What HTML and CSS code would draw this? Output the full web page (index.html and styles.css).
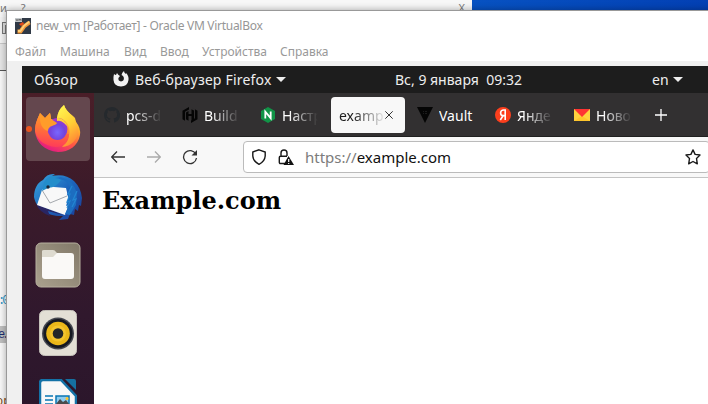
FILE: index.html
```html
<!DOCTYPE html>
<html lang="ru">
<head>
<meta charset="utf-8">
<title>new_vm [Работает] - Oracle VM VirtualBox</title>
<link rel="stylesheet" href="styles.css">
</head>
<body>
<div class="desktop">
  <div class="back-window">
    <div class="back-menu"><span>и</span><span class="help">?</span><span class="close">X</span></div>
    <div class="back-tool"><span class="tool-box"></span></div>
    <div class="back-tabs"></div>
    <div class="back-code">
      <span class="code-a">:0</span>
      <span class="code-b">e.</span>
      <span class="code-c">ор</span>
    </div>
  </div>

  <main class="vm-window">
    <header class="titlebar">
      <svg class="vm-icon" viewBox="0 0 16 16"><rect width="16" height="16" fill="#303946"/><path d="M2.500 13.500H5.500L9 8.500 14.500 4.500" fill="none" stroke="#f49a3c" stroke-width="4"/><path d="M3 13H5.500L9 7.800 14.500 3.500" fill="none" stroke="#ffd27a" stroke-width="1.800"/><path d="M4 6 8 4 9 6 6 8Z" fill="#e34b18"/><path d="M0 0H7V4H0Z" fill="#c3c7ca"/><path d="M1 1 2 3 3 1M4 3V1L5 2 6 1V3" fill="none" stroke="#555" stroke-width=".7"/></svg>
      <span class="title-text">new_vm [Работает] - Oracle VM VirtualBox</span>
    </header>
    <nav class="menubar">
      <span class="m1">Файл</span><span class="m2">Машина</span><span class="m3">Вид</span><span class="m4">Ввод</span><span class="m5">Устройства</span><span class="m6">Справка</span>
    </nav>

    <section class="guest">
      <div class="topbar">
        <span class="overview">Обзор</span>
        <svg class="app-mark" viewBox="0 0 16 16"><path d="M1 3Q2 4 3 4L4 2Q5 4 7 5L5.400 7Q5 10 8 10.500 11.500 10 10.800 6.500 10.400 4.500 8.500 4 9 1.500 11 0 11 2 13 3L13 2Q16 5 15.500 9 14.500 15.500 8 15.500 1 15 .5 9 .3 5.500 1 3Z" fill="#f2f2f2"/></svg>
        <span class="app-name">Веб-браузер Firefox</span>
        <i class="caret"></i>
        <span class="clock">Вс, 9 января&nbsp; 09:32</span>
        <span class="lang">en</span>
        <i class="caret"></i>
      </div>
      <div class="session">
        <aside class="dock">
          <div class="dock-item active">
            <i class="dot"></i>
            <svg class="ic-firefox" viewBox="0 0 46 48">
              <defs>
                <linearGradient id="ff" x1=".8" y1="0" x2=".3" y2="1"><stop offset="0" stop-color="#fff044"/><stop offset=".35" stop-color="#ffb52b"/><stop offset=".65" stop-color="#ff5943"/><stop offset="1" stop-color="#e31587"/></linearGradient>
                <linearGradient id="fy" x1=".3" y1="0" x2=".7" y2="1"><stop offset="0" stop-color="#fff44f"/><stop offset=".5" stop-color="#ffcf35"/><stop offset="1" stop-color="#ff8035"/></linearGradient>
                <linearGradient id="fo" x1=".5" y1="0" x2=".4" y2="1"><stop offset="0" stop-color="#ffa02c"/><stop offset=".4" stop-color="#ff7a33"/><stop offset="1" stop-color="#ff3a5a"/></linearGradient>
                <radialGradient id="fp" cx=".5" cy=".65" r=".6"><stop offset="0" stop-color="#7867ff"/><stop offset=".6" stop-color="#7444dc"/><stop offset="1" stop-color="#a234cb"/></radialGradient>
              </defs>
              <path d="M5 9 10 14 15 9 16 15Q20 16 23 19L22 14Q23 6 29 1 31 7 38 12L40 14 41 18Q46 24 45 31C43 42 34 48 23 48 9 47 1 38 0 27 0 19 3 14 5 9Z" fill="url(#ff)"/>
              <path d="M22 14Q23 6 29 1C31 8 38 11 41 18 47 31 39 42 27 43 37 34 36 22 30 17Q26 13 22 14Z" fill="url(#fy)"/>
              <path d="M5 9 10 14 15 9 16 15Q20 16 22 18V30L34 30C34 38 29 43 21 43 9 42 2 36 0 27 0 19 3 14 5 9Z" fill="url(#fo)"/>
              <ellipse cx="22.500" cy="25" rx="10" ry="11" fill="url(#fp)"/>
              <path d="M5 10 10 14.500 15 9 16 15 22 19C21 22 13 21 13 27 7 26 4 18 5 10Z" fill="#ff9c2a"/>
              <path d="M22 14Q29 13 33 23L29 19Q25 16 22 17Z" fill="#ffd23b"/>
            </svg>
          </div>
          <div class="dock-item">
            <svg class="ic-bird" viewBox="0 0 48 48">
              <defs><linearGradient id="tb" x1="0" y1="0" x2="1" y2="1"><stop stop-color="#38a8df"/><stop offset=".5" stop-color="#1d64bc"/><stop offset="1" stop-color="#1a3891"/></linearGradient></defs>
              <path d="M9 7Q13 0 21 1L18 3Q31 0 40 8 47 15 48 25L47 33 45 32 44 38 41 36 40 42 36 41 34 46 25 47 29 43C15 44 2 36 0 24 0 16 3 10 9 7Z" fill="url(#tb)"/>
              <path d="M2 31Q5 39 16 43L14 38 29 42" fill="#292563"/>
              <path d="M8 17Q12 11 20 14L32 15Q37 31 31 42L3 32Z" fill="#f8f8f8"/>
              <path d="M8 17 16 30 33 23" fill="none" stroke="#a4a8ad"/>
              <path d="M9 14Q10 5 18 3 24 2 27 7 23 14 14 15L8 18Z" fill="#238dcb"/>
              <path d="M21 5Q35 7 36 15L33 22 35 23 32 33 35 32 31 41 36 42 42 32 43 20Q39 7 27 4Z" fill="#1c6dc0"/>
              <path d="M38 13 34 21 36 21 33 29 36 28 33 35M43 18 39 27 42 26 38 34" fill="none" stroke="#2386d2" stroke-width="1.200"/>
              <circle cx="14" cy="14" r="1.700" fill="#17263a"/>
            </svg>
          </div>
          <div class="dock-item">
            <svg class="ic-files" viewBox="0 0 46 46"><defs><linearGradient id="fb" x1="1" x2="0" y1="0" y2="1"><stop stop-color="#827969"/><stop offset="1" stop-color="#aaa18e"/></linearGradient></defs><rect x="1" y="1" width="44" height="44" rx="5" fill="url(#fb)" stroke="#b6af9e"/><path d="M7 9Q7 8 9 8H18Q20 8 21 10L23 12H36V20H7Z" fill="#dedbd0"/><path d="M7 15H18L22 11H36Q39 11 39 14V34Q39 37 36 37H10Q7 37 7 34Z" fill="#faf9f7"/></svg>
          </div>
          <div class="dock-item">
            <svg class="ic-music" viewBox="0 0 38 46"><rect x=".5" y=".5" width="37" height="45" rx="5" fill="#e3dfd5" stroke="#c5c1ba"/><circle cx="19" cy="23.500" r="16" fill="#44464e"/><circle cx="19" cy="23.500" r="14.500" fill="#151821"/><circle cx="19" cy="23.500" r="11.800" fill="#eab719"/><circle cx="19" cy="23.500" r="8" fill="#f3c42d"/><circle cx="19" cy="23.500" r="5.300" fill="#242728"/></svg>
          </div>
          <div class="dock-item last">
            <svg class="ic-writer" viewBox="0 0 38 46"><path d="M4 1H22L37 17V46H1V4Q1 1 4 1Z" fill="#f8f8f8" stroke="#1472a7" stroke-width="2.500"/><path d="M26 0H35Q37 0 37 2V11Z" fill="#1570a1"/><path d="M6 17H14M6 21H14M6 25H14" stroke="#0875b3" stroke-width="1.600"/><rect x="17" y="17" width="13" height="11" fill="#8dccf0" stroke="#0875b3" stroke-width="1.500"/><path d="M17 28V25L21 20 24 23 27 21 30 25V28Z" fill="#4a4b4d"/><circle cx="28" cy="19.500" r="1.500" fill="#ffc327"/></svg>
          </div>
        </aside>

        <div class="browser">
          <div class="tabs">
            <div class="tab"><svg viewBox="0 0 16 16"><path fill="#25292d" d="M8 0C3.580 0 0 3.580 0 8c0 3.540 2.290 6.530 5.470 7.590.4.070.55-.17.55-.38v-1.490c-2.010.37-2.530-.49-2.690-.94-.09-.23-.48-.94-.82-1.130-.28-.15-.68-.52-.01-.53.63-.01 1.080.58 1.230.82.72 1.210 1.870.87 2.330.66.07-.52.28-.87.51-1.070-1.780-.2-3.640-.89-3.640-3.950 0-.87.31-1.590.82-2.150-.08-.2-.36-1.020.08-2.120 0 0 .67-.21 2.200.82a7.500 7.500 0 0 1 4 0c1.530-1.040 2.200-.82 2.200-.82.44 1.100.16 1.920.08 2.120.51.56.82 1.270.82 2.150 0 3.070-1.870 3.750-3.650 3.950.29.25.54.73.54 1.480v2.200c0 .21.15.46.55.38A8 8 0 0 0 8 0Z"/></svg><span class="label">pcs-d</span></div>
            <div class="tab"><svg viewBox="0 0 16 16"><path d="M7 0V2.500L3 4.800V13.700L.5 12.300V3.700ZM4 5.500 6.500 4V7H9.500V2.200L12 3.600V12.300L9.500 13.800V9H6.500V13.700L4 12.300ZM9 0 15.500 3.700V12.300L9 16V13.500L13 11.200V2.300Z" fill="#050505"/></svg><span class="label">Build</span></div>
            <div class="tab"><svg viewBox="0 0 16 16"><path d="M8 0 15 4V12L8 16 1 12V4Z" fill="#119447"/><path d="M5.300 11.500V4.700L10.700 11.200V4.500" fill="none" stroke="#fff" stroke-width="1.800"/></svg><span class="label">Настр</span></div>
            <div class="tab selected"><span class="label">examp</span><svg class="x" viewBox="0 0 8 8"><path d="M.3.3 7.700 7.700M7.700.3.3 7.700"/></svg></div>
            <div class="tab vault"><svg viewBox="0 0 16 16"><path d="M0 0H16L8 16Z" fill="#050505"/><path d="M6 4H7V5H6ZM8 4H10V5H8ZM6 6H7V7H6ZM8 6H10V7H8Z" fill="#1c1c1c"/></svg><span class="label">Vault</span></div>
            <div class="tab"><svg viewBox="0 0 16 16"><circle cx="8" cy="8" r="8" fill="#fc3f1d"/><path d="M10.200 13V3H8.600C6.700 3 5.600 4.200 5.600 5.900 5.600 7.900 6.700 8.600 8.400 8.600H10M8 8.700 5.300 13" fill="none" stroke="#fff" stroke-width="1.600"/></svg><span class="label">Янде</span></div>
            <div class="tab mail"><svg viewBox="0 0 16 16"><path d="M0 2H16V14H0Z" fill="#ffd23e"/><path d="M0 14 8 9 16 14Z" fill="#ffc52b"/><path d="M0 2H16L8 10Z" fill="#ff3333"/></svg><span class="label">Ново</span></div>
            <svg class="plus" viewBox="0 0 12 12"><path d="M6 0V12M0 6H12"/></svg>
          </div>
          <div class="toolbar">
            <svg class="nav-back" viewBox="0 0 14 12"><path d="M14 6H.8M6 .5.7 6 6 11.500"/></svg>
            <svg class="nav-fwd" viewBox="0 0 14 12"><path d="M0 6H13.200M8 .5 13.300 6 8 11.500"/></svg>
            <svg class="nav-reload" viewBox="0 0 16 16"><path d="M13.800 5A6.500 6.500 0 1 0 14.500 9"/><path class="fill" d="M15 1V6.500H9.500Z"/></svg>
            <div class="address">
              <svg class="shield" viewBox="0 0 14 16"><path d="M7 .8 13.200 3V7Q12.800 12.500 7 15.300 1.200 12.500.8 7V3Z"/></svg>
              <svg class="lock" viewBox="0 0 16 16"><path d="M7 14.500H2.500Q1.300 14.500 1.300 13.300V8.500Q1.300 7.200 2.500 7.200H9M3 7V4Q3 1 6 1T9 4V7"/><path class="warn" d="M10.500 7 16 16H5.500Z"/><path class="bang" d="M10.700 10V13M10.700 14V15"/></svg>
              <span class="url"><span>https://</span>example.com</span>
              <svg class="star" viewBox="0 0 16 16"><path stroke-linejoin="round" d="M8 .9 10.100 5.400 15 6 11.500 9.500 12.300 14.800 8 12.500 3.700 14.800 4.500 9.500 1 6 5.900 5.400Z"/></svg>
            </div>
          </div>
          <article class="page"><h1>Example.com</h1></article>
        </div>
      </div>
    </section>
  </main>
</div>
</body>
</html>
```

FILE: styles.css
```css
* { box-sizing: border-box; }
body { margin: 0; overflow: hidden; font-family: "Noto Sans", sans-serif; }
svg { display: block; flex: none; }
span { white-space: nowrap; }
.desktop { position: relative; width: 708px; height: 404px; overflow: hidden; background: linear-gradient(90deg, #0752c2 472px, #0340b4 708px); }

.back-window { width: 472px; height: 404px; background: #f3f3f3; color: #777; }
.back-menu { display: flex; height: 17px; font-size: 11px; line-height: 15px; background: #f7f7f7; }
.help { margin-left: 14px; }
.close { margin-left: auto; margin-right: 7px; }
.back-tool { height: 26px; padding: 5px 0 0 2px; }
.tool-box { display: block; width: 12px; height: 12px; border: 1px solid #777; box-shadow: inset 2px 2px #ddd; background: #777; }
.back-tabs { height: 28px; border-top: 1px solid #c8c8c8; border-bottom: 1px solid #555; background: #e6e6e6; }
.back-code { display: flex; flex-direction: column; height: 333px; padding-top: 222px; background: #f8f8f8; font: 12px/16px "Liberation Mono", monospace; color: #1d2b6d; }
.back-code span { flex: none; }
.code-a { height: 33px; margin-left: -2px; color: #2a93c4; letter-spacing: -3px; }
.code-b { width: 12px; height: 17px; background: #bfbfbf; letter-spacing: -3px; line-height: 18px; text-indent: -2px; }
.code-c { margin-top: 51px; margin-left: -4px; color: #7b4a20; }

.vm-window { position: absolute; left: 6px; top: 10px; width: 710px; height: 400px; border: 1px solid #999; background: #f0f0f0; box-shadow: 0 0 7px rgba(0,0,0,.35); }
.titlebar { display: flex; align-items: center; height: 30px; padding-left: 8px; background: #fff; color: #969696; }
.vm-icon { width: 16px; height: 16px; margin-right: 5px; margin-top: -1px; }
.title-text { font-size: 12px; letter-spacing: -.29px; line-height: 16px; }
.menubar { display: flex; height: 20px; padding-left: 8px; background: #fff; color: #999; font-size: 12px; line-height: 22px; }
.m1 { width: 45px; }
.m2 { width: 64px; }
.m3 { width: 36px; }
.m4 { width: 42px; }
.m5 { width: 78px; }

.guest { width: 700px; height: 344px; margin: 5px 0 0 15px; background: #fff; }
.topbar { display: flex; align-items: center; height: 27px; padding-left: 12px; background: #1d1d1d; color: #eee; font-size: 14px; }
.overview { width: 79px; letter-spacing: .25px; }
.app-mark { width: 16px; height: 16px; margin: -1px 6px 0 0; }
.app-name { width: 137px; letter-spacing: .2px; }
.caret { width: 0; height: 0; margin-left: 4px; border: 5px solid transparent; border-top-color: #eee; border-bottom: 0; }
.clock { width: 257px; margin-left: 109px; }
.lang { width: 17px; }
.session { display: flex; height: 317px; }
.dock { width: 72px; padding-top: 4px; background: linear-gradient(#4a1e28, #3c1b2a 30%, #30182d 70%, #2b162b); }
.dock-item { display: flex; justify-content: center; height: 64px; margin: 0 4px 4px; padding-top: 8px; border-radius: 4px; }
.dock-item.active { position: relative; padding-top: 7px; background: #64474e; }
.dot { position: absolute; left: 0; top: 29px; width: 6px; height: 6px; border-radius: 50%; background: #e95420; }
.ic-firefox { width: 46px; height: 48px; }
.ic-bird { width: 48px; height: 48px; }
.ic-files { width: 46px; height: 46px; margin-top: 1px; }
.ic-music { width: 38px; height: 46px; margin-top: 1px; }
.ic-writer { width: 38px; height: 46px; margin-top: 2px; }

.browser { width: 628px; }
.tabs { display: flex; align-items: center; height: 44px; padding-left: 10px; background: #323031; border-bottom: 1px solid #202020; color: #fff; font-size: 14px; }
.tab { display: flex; align-items: center; width: 78px; height: 36px; }
.tab svg { width: 16px; height: 16px; margin-right: 6px; }
.tab .label { width: 36px; padding-top: 1px; overflow: hidden; -webkit-mask-image: linear-gradient(90deg, #000 20%, transparent); mask-image: linear-gradient(90deg, #000 20%, transparent); }
.tab.selected { width: 74px; margin: 0 12px 0 -7px; padding-left: 8px; border-radius: 4px; background: #f8f8f8; color: #202020; }
.tab.selected .label { width: 45px; -webkit-mask-image: linear-gradient(90deg, #000 30%, transparent 105%); mask-image: linear-gradient(90deg, #000 30%, transparent 105%); }
.tab.selected .x { width: 8px; height: 8px; margin: 0 0 0 1px; fill: none; stroke: #333; stroke-width: 1; }
.tab.vault .label { -webkit-mask-image: none; mask-image: none; }
.tab.mail { margin-left: 1px; }
.plus { width: 12px; height: 12px; margin-left: 3px; stroke: #fff; stroke-width: 1.3; }
.toolbar { display: flex; align-items: center; height: 41px; padding-left: 17px; background: #f8f8f8; border-bottom: 1px solid #c4c4c4; fill: none; stroke: #333; stroke-width: 1.3; }
.nav-back, .nav-fwd { width: 14px; height: 12px; }
.nav-fwd { margin-left: 22px; stroke: #aaa; }
.nav-reload { width: 16px; height: 16px; margin-left: 21px; }
.fill { fill: #333; stroke: none; }
.address { display: flex; align-items: center; flex: none; width: 467px; height: 32px; margin-left: 45px; padding-left: 8px; border: 1px solid #bbb; border-radius: 4px; background: #fff; stroke: #181818; stroke-width: 1.4; }
.shield { width: 14px; height: 16px; }
.lock { width: 16px; height: 16px; margin-left: 12px; }
.warn { fill: #111; stroke: none; }
.bang { stroke: #fff; stroke-width: 1.2; }
.url { width: 380px; margin-left: 11px; font-size: 15px; color: #111; }
.url span { color: #7c7c7c; }
.star { width: 16px; height: 16px; }
.page { padding: 8px 8px; color: #000; }
.page h1 { margin: 0; font: bold 24px/30px "DejaVu Serif", serif; }
```
